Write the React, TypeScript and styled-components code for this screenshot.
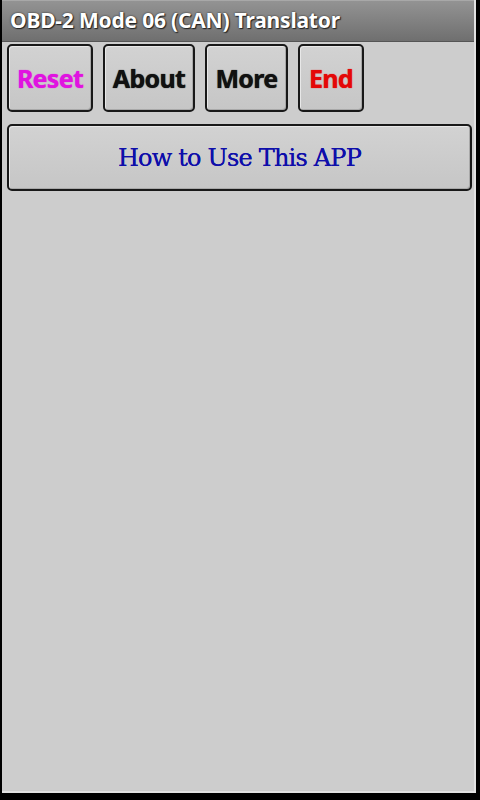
import React from 'react';
import styled, {createGlobalStyle} from 'styled-components';

const GlobalStyle = createGlobalStyle`
  html, body {
    margin: 0;
    padding: 0;
    background: #000;
  }
  * { box-sizing: border-box; }
`;

const buttons = [
  {label: 'Reset', color: '#e014e0', width: 86},
  {label: 'About', color: '#111111', width: 92},
  {label: 'More', color: '#111111', width: 83},
  {label: 'End', color: '#e40808', width: 66},
];

const App = () => {
  return (
    <>
      <GlobalStyle />
      <Screen>
        <Frame>
          <TitleBar>OBD-2 Mode 06 (CAN) Translator</TitleBar>
          <Body>
            <ButtonRow>
              {buttons.map(b => (
                <ToolButton key={b.label} $color={b.color} $width={b.width}>
                  {b.label}
                </ToolButton>
              ))}
            </ButtonRow>
            <HelpButton>How to Use This APP</HelpButton>
          </Body>
        </Frame>
      </Screen>
    </>
  );
};

const Screen = styled.div`
  width: 480px;
  height: 800px;
  background: #000;
  padding: 0 4px 7px 2px;
  display: flex;
`;

const Frame = styled.div`
  flex: 1;
  display: flex;
  flex-direction: column;
  background: #cdcdcd;
  border-right: 2px solid #e2e2e2;
  border-bottom: 2px solid #e2e2e2;
`;

const TitleBar = styled.div`
  height: 42px;
  padding: 0 0 2px 8px;
  display: flex;
  align-items: center;
  background: linear-gradient(#939393, #6f6f6f);
  border-top: 1px solid #a8a8a8;
  border-bottom: 1px solid #555;
  color: #fff;
  font-family: 'Noto Sans', 'Open Sans', sans-serif;
  font-weight: bold;
  font-size: 21px;
  letter-spacing: -0.2px;
  text-shadow: 0 0 2px #222, 1px 1px 1px #222;
  white-space: nowrap;
`;

const Body = styled.div`
  flex: 1;
  padding: 2px 2px 0 5px;
  display: flex;
  flex-direction: column;
  gap: 12px;
`;

const ButtonRow = styled.div`
  display: flex;
  gap: 10px;
`;

const ButtonBase = styled.div`
  height: 68px;
  display: flex;
  align-items: center;
  justify-content: center;
  border: 2px solid #181818;
  border-radius: 5px;
  background: linear-gradient(#d2d2d2, #c6c6c6);
  box-shadow: inset 1px 1px 0 #e8e8e8, inset -1px -1px 0 #a8a8a8;
`;

const ToolButton = styled(ButtonBase)<{$color: string; $width: number}>`
  width: ${p => p.$width}px;
  color: ${p => p.$color};
  font-family: 'Noto Sans', 'Open Sans', sans-serif;
  font-weight: bold;
  font-size: 25px;
  letter-spacing: -0.7px;
  text-shadow: 0 0 1px ${p => p.$color};
`;

const HelpButton = styled(ButtonBase)`
  width: 465px;
  height: 67px;
  color: #0e0eaa;
  font-family: 'DejaVu Serif', 'Liberation Serif', serif;
  font-size: 24px;
  letter-spacing: -0.8px;
  text-shadow: 0 0 0.6px #0e0eaa;
`;

export default App;
